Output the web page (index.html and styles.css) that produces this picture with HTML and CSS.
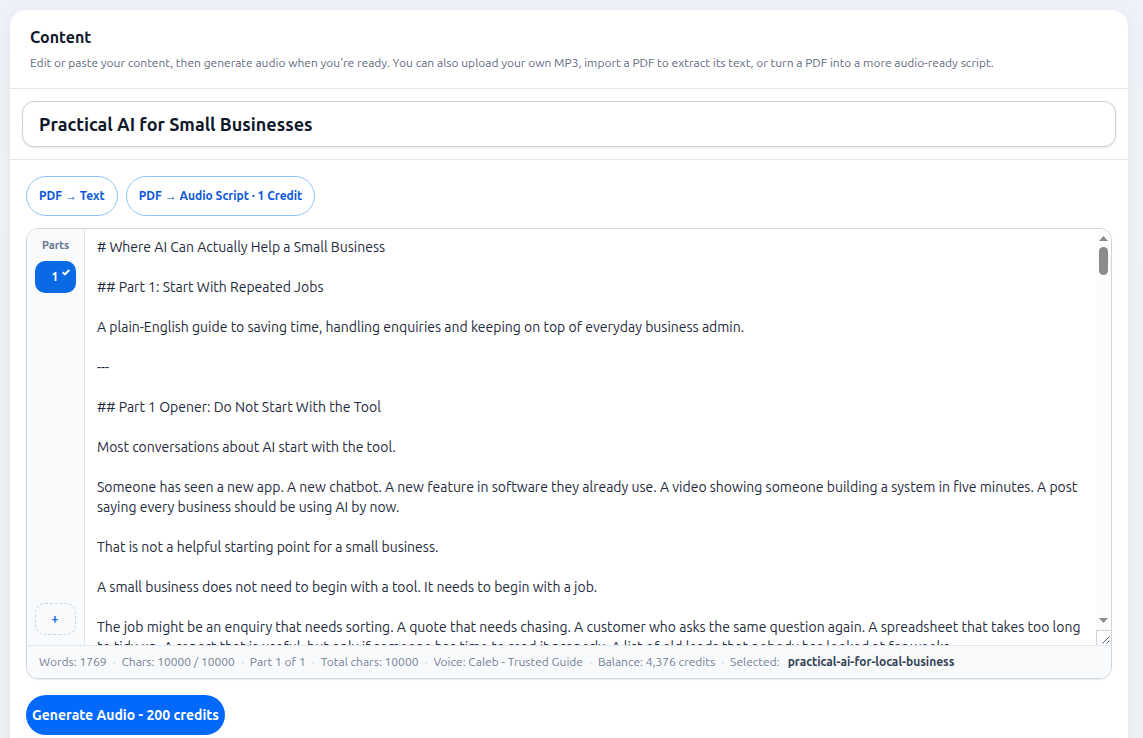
FILE: index.html
```html
<!DOCTYPE html>
<html lang="en">
<head>
    <meta charset="UTF-8">
    <meta name="viewport" content="width=device-width, initial-scale=1.0">
    <title>Content</title>
    <link rel="stylesheet" href="styles.css">
</head>
<body>
    <main class="card">
        <header class="card-header">
            <h2>Content</h2>
            <p>Edit or paste your content, then generate audio when you're ready. You can also upload your own MP3, import a PDF to extract its text, or turn a PDF into a more audio-ready script.</p>
        </header>

        <div class="title-row">
            <input type="text" class="title-input" aria-label="Title" value="Practical AI for Small Businesses">
        </div>

        <div class="card-body">
            <div class="tools">
                <button type="button" class="pill">PDF → Text</button>
                <button type="button" class="pill">PDF → Audio Script · 1 Credit</button>
            </div>

            <div class="editor">
                <div class="editor-main">
                    <nav class="parts" aria-label="Parts">
                        <span class="parts-label">Parts</span>
                        <button type="button" class="part active">1
                            <svg class="check" viewBox="0 0 8 7" aria-hidden="true"><path d="M.8 3.2 3 5.400 7.200 1" fill="none" stroke="currentColor" stroke-width="2"/></svg>
                        </button>
                        <button type="button" class="part add" aria-label="Add part">+</button>
                    </nav>
                    <textarea class="text" aria-label="Content text" spellcheck="false"># Where AI Can Actually Help a Small Business

## Part 1: Start With Repeated Jobs

A plain-English guide to saving time, handling enquiries and keeping on top of everyday business admin.

---

## Part 1 Opener: Do Not Start With the Tool

Most conversations about AI start with the tool.

Someone has seen a new app. A new chatbot. A new feature in software they already use. A video showing someone building a system in five minutes. A post saying every business should be using AI by now.

That is not a helpful starting point for a small business.

A small business does not need to begin with a tool. It needs to begin with a job.

The job might be an enquiry that needs sorting. A quote that needs chasing. A customer who asks the same question again. A spreadsheet that takes too long to tidy up. A report that is useful, but only if someone has time to read it properly. A list of old leads that nobody has looked at for weeks.</textarea>
                    <div class="scrollbar" aria-hidden="true">
                        <svg class="scroll-arrow" viewBox="0 0 9 5"><path d="M0 5 4.5 0 9 5z"/></svg>
                        <div class="scroll-thumb"></div>
                        <svg class="scroll-arrow down" viewBox="0 0 9 5"><path d="M0 0 4.5 5 9 0z"/></svg>
                        <svg class="resizer" viewBox="0 0 15 15"><path d="M.5 15V.5H15" stroke="#d0d3d8"/><path d="M6.500 13.500 13.500 6.500M10.500 13.500 13.500 10.500" stroke="#555"/></svg>
                    </div>
                </div>
                <footer class="status">
                    <span>Words: 1769</span>
                    <span>Chars: 10000 / 10000</span>
                    <span>Part 1 of 1</span>
                    <span>Total chars: 10000</span>
                    <span>Voice: Caleb - Trusted Guide</span>
                    <span>Balance: 4,376 credits</span>
                    <span>Selected:</span>
                    <strong>practical-ai-for-local-business</strong>
                </footer>
            </div>

            <button type="button" class="generate">Generate Audio - 200 credits</button>
        </div>
    </main>
</body>
</html>
```
FILE: styles.css
```css
* {
    box-sizing: border-box;
}
body {
    margin: 0;
    padding: 10px 15px 0 10px;
    min-height: 100vh;
    font-family: Ubuntu, "Noto Sans", sans-serif;
    color: #0f172a;
    background: linear-gradient(#eef1f7, #eff2f5 40%);
}
button, input, textarea {
    font-family: inherit;
}
button {
    cursor: pointer;
}
.card {
    background: #fff;
    border-radius: 16px 16px 0 0;
    box-shadow: 0 4px 14px rgba(15, 23, 42, 0.06);
}
.card-header {
    padding: 16px 20px;
    border-bottom: 1px solid #e5e7eb;
}
.card-header h2 {
    margin: 0;
    font-size: 16px;
    line-height: 22px;
    font-weight: 600;
}
.card-header p {
    margin: 6px 0 0;
    font-size: 12px;
    line-height: 18px;
    color: #5f6b7e;
}
.title-row {
    padding: 12px;
    border-bottom: 1px solid #e5e7eb;
}
.title-input {
    display: block;
    width: 100%;
    height: 46px;
    padding: 0 16px;
    border: 1px solid #cbd0d9;
    border-radius: 12px;
    box-shadow: 0 1px 2px rgba(15, 23, 42, 0.1);
    font-size: 18px;
    font-weight: 600;
    color: #0f172a;
}
.card-body {
    padding: 16px 16px 24px;
}
.tools {
    display: flex;
    gap: 8px;
    margin-bottom: 12px;
}
.pill {
    height: 40px;
    padding: 0 12px 1px;
    border: 1px solid #93c5fd;
    border-radius: 20px;
    background: #fff;
    color: #0b57d8;
    font-size: 12px;
    font-weight: 600;
}
.editor {
    border: 1px solid #cfd6dd;
    border-radius: 12px;
    overflow: hidden;
    box-shadow: 0 1px 1px rgba(15, 23, 42, 0.08);
}
.editor-main {
    display: flex;
    height: 416px;
}
.parts {
    display: flex;
    flex-direction: column;
    flex: none;
    width: 58px;
    padding: 8px 8px 10px;
    border-right: 1px solid #dfe3ea;
    background: #f8fafc;
}
.parts-label {
    margin-bottom: 8px;
    font-size: 11px;
    line-height: 16px;
    font-weight: 600;
    text-align: center;
    color: #64748b;
}
.part {
    position: relative;
    height: 32px;
    padding: 0 1px 1px 0;
    border-radius: 10px;
    font-size: 12px;
    font-weight: 700;
}
.part.active {
    border: 0;
    background: #0a6ae6;
    color: #fff;
}
.check {
    position: absolute;
    top: 8px;
    right: 6px;
    width: 8px;
    height: 7px;
}
.part.add {
    margin-top: auto;
    border: 1px dashed #cbd5e1;
    background: transparent;
    color: #1d6fe0;
}
.text {
    flex: 1;
    min-width: 0;
    height: 100%;
    padding: 8px 12px;
    border: 0;
    outline: 0;
    resize: none;
    font-size: 14px;
    line-height: 20px;
    color: #1e293b;
    scrollbar-width: none;
}
.scrollbar {
    display: flex;
    flex-direction: column;
    align-items: center;
    flex: none;
    width: 15px;
    padding-top: 7px;
    background: #fcfcfc;
}
.scroll-arrow {
    width: 9px;
    height: 5px;
    fill: #8b8b8b;
}
.scroll-arrow.down {
    margin: auto 0 7px;
}
.scroll-thumb {
    width: 9px;
    height: 28px;
    margin-top: 6px;
    border-radius: 5px;
    background: #8b8b8b;
}
.resizer {
    width: 15px;
    height: 15px;
    fill: none;
    background: #fff;
}
.status {
    display: flex;
    padding: 8px 12px;
    border-top: 1px solid #e2e8f0;
    background: #f8fafc;
    font-size: 12px;
    line-height: 16px;
    white-space: nowrap;
    color: #748094;
}
.status span::after {
    content: "·";
    margin: 0 6px;
    color: #b6c0cd;
}
.status span:last-of-type::after {
    content: "";
    margin: 0 4px;
}
.status strong {
    font-weight: 600;
    color: #334155;
}
.generate {
    display: block;
    height: 40px;
    margin-top: 16px;
    padding: 0 6px;
    border: 0;
    border-radius: 20px;
    background: #0369fd;
    color: #fff;
    font-size: 14px;
    font-weight: 700;
}
```
